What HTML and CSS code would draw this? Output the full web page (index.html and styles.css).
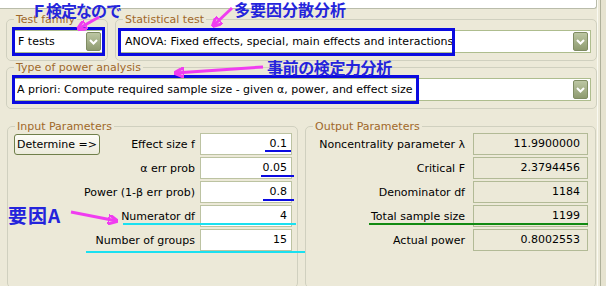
FILE: index.html
```html
<!DOCTYPE html>
<html lang="ja">
<head>
    <meta charset="UTF-8">
    <title>G*Power - ANOVA</title>
    <link rel="stylesheet" href="styles.css">
</head>
<body>
    <div class="page">
        <div class="content">
            <div class="topbar"></div>
            <div class="row">
                <fieldset class="group family">
                    <legend>Test family</legend>
                    <div class="body">
                        <div class="select"><span>F tests</span><i class="drop"><svg width="15" height="19" viewBox="0 0 15 19"><polyline points="4,8 7.5,11.5 11,8" fill="none" stroke="#fff" stroke-width="2"/></svg></i></div>
                    </div>
                </fieldset>
                <fieldset class="group stat">
                    <legend>Statistical test</legend>
                    <div class="body">
                        <div class="select"><span>ANOVA: Fixed effects, special, main effects and interactions</span><i class="drop"><svg width="15" height="19" viewBox="0 0 15 19"><polyline points="4,8 7.5,11.5 11,8" fill="none" stroke="#fff" stroke-width="2"/></svg></i></div>
                    </div>
                </fieldset>
            </div>
            <fieldset class="group power">
                <legend>Type of power analysis</legend>
                <div class="body">
                    <div class="select"><span>A priori: Compute required sample size - given α, power, and effect size</span><i class="drop"><svg width="15" height="19" viewBox="0 0 15 19"><polyline points="4,8 7.5,11.5 11,8" fill="none" stroke="#fff" stroke-width="2"/></svg></i></div>
                </div>
            </fieldset>
            <div class="params">
                <fieldset class="group input">
                    <legend>Input Parameters</legend>
                    <div class="body">
                        <div class="prow"><button class="determine">Determine =&gt;</button><label>Effect size f</label><div class="field">0.1</div></div>
                        <div class="prow"><label>α err prob</label><div class="field">0.05</div></div>
                        <div class="prow"><label>Power (1-β err prob)</label><div class="field">0.8</div></div>
                        <div class="prow"><label>Numerator df</label><div class="field">4</div></div>
                        <div class="prow"><label>Number of groups</label><div class="field">15</div></div>
                    </div>
                </fieldset>
                <fieldset class="group output">
                    <legend>Output Parameters</legend>
                    <div class="body">
                        <div class="prow"><label>Noncentrality parameter λ</label><div class="field">11.9900000</div></div>
                        <div class="prow"><label>Critical F</label><div class="field">2.3794456</div></div>
                        <div class="prow"><label>Denominator df</label><div class="field">1184</div></div>
                        <div class="prow"><label>Total sample size</label><div class="field">1199</div></div>
                        <div class="prow"><label>Actual power</label><div class="field">0.8002553</div></div>
                    </div>
                </fieldset>
            </div>
        </div>
        <div class="rail"></div>
    </div>

    <!-- annotations drawn on top of the screenshot -->
    <div class="mark mark-family"></div>
    <div class="mark mark-stat"></div>
    <div class="mark mark-power"></div>

    <div class="uline blue u-effect"></div>
    <div class="uline blue u-alpha"></div>
    <div class="uline blue u-power"></div>
    <div class="uline cyan u-num"></div>
    <div class="uline cyan u-groups"></div>
    <div class="uline green u-total"></div>

    <div class="note note-family">Ｆ検定なので</div>
    <div class="note note-stat">多要因分散分析</div>
    <div class="note note-power">事前の検定力分析</div>
    <div class="note note-factor">要因A</div>

    <svg class="arrows" width="606" height="286" viewBox="0 0 606 286">
        <defs>
            <marker id="head" viewBox="0 0 10 10" refX="9" refY="5" markerWidth="3.4" markerHeight="3.4" orient="auto">
                <path d="M0 0 L10 5 L0 10 z" fill="#f03cf0"/>
            </marker>
        </defs>
        <path d="M99 17 L78 29" marker-end="url(#head)"/>
        <path d="M232 8 L213 26" marker-end="url(#head)"/>
        <path d="M263 67 L175 73" marker-end="url(#head)"/>
        <path d="M71 212 L117 221" marker-end="url(#head)"/>
    </svg>
</body>
</html>
```

FILE: styles.css
```css
body {
    margin: 0;
    width: 606px;
    height: 286px;
    overflow: hidden;
    position: relative;
    background-color: #ece9d8;
    font-family: "DejaVu Sans", Tahoma, sans-serif;
    font-size: 11px;
    color: #000;
}
.page {
    display: flex;
    height: 286px;
    overflow: hidden;
}
.content {
    width: 597px;
    padding-left: 6px;
    box-sizing: border-box;
}
.rail {
    flex: 1;
    background: linear-gradient(to right, #fafaf2 0 1px, #ece9d8 1px 3px, #aeb09a 3px 4px, #e6e3d0 4px);
}
.topbar {
    height: 8px;
    margin-left: -6px;
    background-color: #fff;
    border-bottom: 1px solid #b9bcaa;
    border-right: 1px solid #b9bcaa;
    border-bottom-right-radius: 3px;
}
.row {
    display: flex;
    gap: 7px;
    margin-top: 4px;
}
.group {
    margin: 0;
    padding: 0;
    min-width: 0;
    border: 1px solid #d0d0bf;
    border-radius: 5px;
    box-sizing: border-box;
}
.group legend {
    margin-left: 7px;
    padding: 0 2px;
    line-height: 13px;
    color: #a0682a;
}
.family {
    width: 102px;
}
.family .body {
    padding: 4px 3px 7px 6px;
}
.stat {
    flex: 1;
}
.stat .body {
    padding: 4px 5px 7px 4px;
}
.power .body {
    padding: 4px 5px 7px 5px;
}
.select {
    display: flex;
    align-items: center;
    height: 23px;
    box-sizing: border-box;
    padding: 0 2px 0 4px;
    background-color: #fff;
    border: 1px solid #aebd8e;
}
.select span {
    flex: 1;
    white-space: nowrap;
    overflow: hidden;
}
.drop {
    display: block;
    width: 15px;
    height: 19px;
    box-sizing: border-box;
    border: 1px solid #7f8c63;
    border-radius: 2px;
    background: linear-gradient(#bcc6a3, #8e9b70);
}
.drop svg {
    display: block;
    margin: -1px;
}
.params {
    display: flex;
    gap: 7px;
    margin: 11px 0 0 1px;
}
.input, .output {
    width: 291px;
    height: 168px;
}
.body {
    display: flex;
    flex-direction: column;
    gap: 2px;
}
.input .body {
    padding: 0 5px 0 6px;
}
.output .body {
    padding: 0 7px 0 0;
}
.prow {
    display: flex;
    align-items: center;
    justify-content: flex-end;
    gap: 5px;
    height: 22px;
}
.output .prow {
    gap: 8px;
}
.prow label {
    white-space: nowrap;
}
.field {
    width: 92px;
    height: 22px;
    box-sizing: border-box;
    padding-right: 4px;
    line-height: 20px;
    text-align: right;
    background-color: #fff;
    border: 1px solid #bcc3a2;
}
.output .field {
    width: 115px;
    padding-right: 7px;
    background-color: transparent;
    border-color: #b2ba96;
}
.determine {
    margin-right: auto;
    width: 86px;
    height: 21px;
    padding: 0;
    font: inherit;
    color: #000;
    background: linear-gradient(#fdfdf8, #ecebdc);
    border: 1px solid #6f7f4a;
    border-radius: 3px;
}

/* annotations */
.mark {
    position: absolute;
    box-sizing: border-box;
    border: 3px solid #0b0be0;
}
.mark-family {
    left: 12px;
    top: 27px;
    width: 93px;
    height: 29px;
}
.mark-stat {
    left: 118px;
    top: 28px;
    width: 337px;
    height: 28px;
}
.mark-power {
    left: 12px;
    top: 75px;
    width: 407px;
    height: 29px;
}
.uline {
    position: absolute;
    height: 2px;
}
.blue {
    background-color: #0b0be0;
}
.cyan {
    background-color: #1ae0f0;
}
.green {
    background-color: #128a12;
}
.u-effect {
    left: 265px;
    top: 150px;
    width: 26px;
}
.u-alpha {
    left: 261px;
    top: 175px;
    width: 33px;
}
.u-power {
    left: 263px;
    top: 199px;
    width: 31px;
}
.u-num {
    left: 123px;
    top: 223px;
    width: 173px;
}
.u-groups {
    left: 86px;
    top: 251px;
    width: 219px;
}
.u-total {
    left: 369px;
    top: 223px;
    width: 219px;
}
.note {
    position: absolute;
    font-family: "Noto Sans CJK JP", sans-serif;
    font-size: 16px;
    font-weight: bold;
    line-height: 1;
    color: #2424dc;
    white-space: nowrap;
}
.note-family {
    left: 31px;
    top: 2px;
    letter-spacing: -1px;
}
.note-stat {
    left: 234px;
    top: 1px;
}
.note-power {
    left: 267px;
    top: 59px;
    letter-spacing: -0.4px;
}
.note-factor {
    left: 8px;
    top: 205px;
    font-size: 19px;
    letter-spacing: 1px;
}
.arrows {
    position: absolute;
    left: 0;
    top: 0;
    pointer-events: none;
}
.arrows path {
    fill: none;
    stroke: #f03cf0;
    stroke-width: 3;
}
```
